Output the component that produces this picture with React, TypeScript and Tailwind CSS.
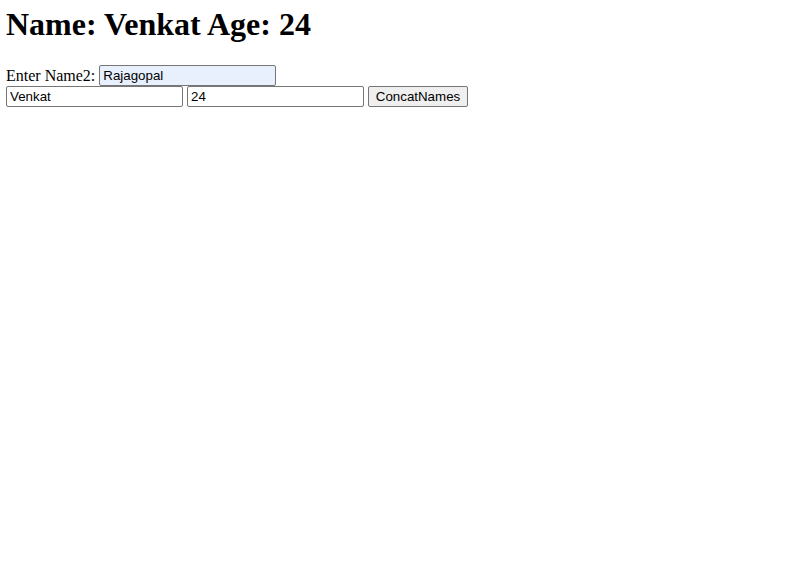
import { useState } from 'react'

export default function App() {
  const [name, setName] = useState('Venkat')
  const [age, setAge] = useState('24')
  const [name2, setName2] = useState('Rajagopal')

  const inputCls =
    "h-[21px] w-[177px] border border-[#767676] rounded-[2px] pl-[3px] pr-[2px] text-[13.33px] text-black font-['Liberation_Sans',Arial,sans-serif] outline-none"

  return (
    <div className="min-h-screen bg-white px-[6px] pt-[6px] font-['Liberation_Serif','Times_New_Roman',serif] text-black">
      <h1 className="text-[32px] font-bold leading-[37px] mb-[22px]">
        Name: {name} Age: {age}
      </h1>

      {/* champ auto-rempli */}
      <div className="flex items-center gap-[4px] h-[21px]">
        <span className="text-[16px]">Enter Name2:</span>
        <input
          className={`${inputCls} bg-[#e8f0fe]`}
          value={name2}
          onChange={(e) => setName2(e.target.value)}
        />
      </div>

      <div className="flex items-center gap-[4px] h-[21px]">
        <input className={`${inputCls} bg-white`} value={name} onChange={(e) => setName(e.target.value)} />
        <input className={`${inputCls} bg-white`} value={age} onChange={(e) => setAge(e.target.value)} />
        <button
          onClick={() => setName(name + name2)}
          className="h-[21px] w-[100px] border border-[#767676] rounded-[2px] bg-[#efefef] text-[13.33px] text-black font-['Liberation_Sans',Arial,sans-serif]"
        >
          ConcatNames
        </button>
      </div>
    </div>
  )
}
